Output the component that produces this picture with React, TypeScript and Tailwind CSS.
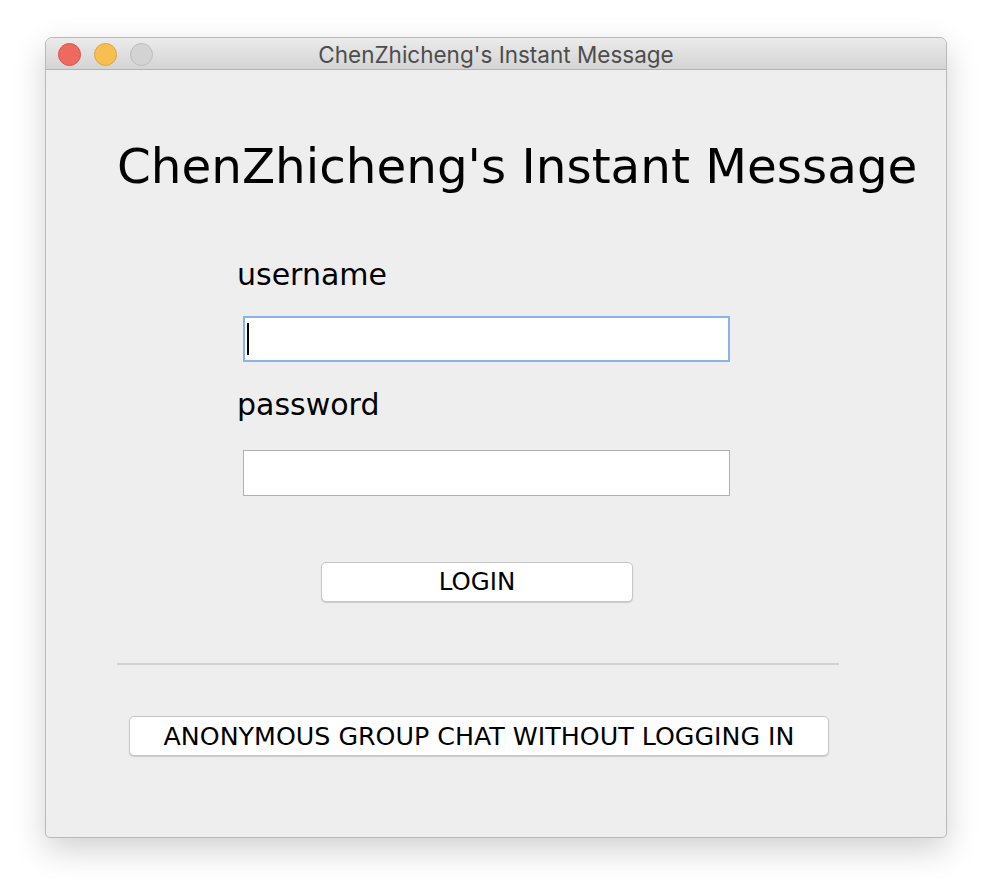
import React from 'react';

const TrafficLights: React.FC = () => (
  <div className="flex items-center gap-[13px] pl-[12px] pt-[1px]">
    <span className="block w-[23px] h-[23px] rounded-full bg-[#ee6a5f] border border-[#d8544a]" />
    <span className="block w-[23px] h-[23px] rounded-full bg-[#f6bf4f] border border-[#dca43e]" />
    <span className="block w-[23px] h-[23px] rounded-full bg-[#d3d3d3] border border-[#bcbcbc]" />
  </div>
);

const App: React.FC = () => {
  return (
    <div className="w-[992px] h-[892px] bg-white overflow-hidden pt-[37px] pl-[45px]">
      <div className="w-[902px] h-[801px] flex flex-col rounded-t-[7px] rounded-b-[5px] border border-[#b9b9b9] bg-[#eeeeee] shadow-[0_12px_32px_rgba(0,0,0,0.18)] overflow-hidden">
        {/* title bar */}
        <div className="relative h-[32px] shrink-0 flex items-center bg-gradient-to-b from-[#ebebeb] to-[#d4d4d4] border-b border-[#b3b3b3]">
          <TrafficLights />
          <div className="absolute inset-0 flex items-center justify-center pt-[2px] text-[22.5px] text-[#4d4d4d] font-['Inter',sans-serif] pointer-events-none">
            ChenZhicheng's Instant Message
          </div>
        </div>

        {/* body */}
        <div className="flex flex-col font-['DejaVu_Sans',sans-serif] text-black">
          <h1 className="mt-[72px] ml-[71px] text-[48.4px] leading-none whitespace-nowrap">
            ChenZhicheng's Instant Message
          </h1>

          <div className="mt-[70px] ml-[191px] text-[30px] leading-none">username</div>
          <div className="mt-[26px] ml-[197px] w-[487px] h-[46px] bg-white border-2 border-[#88b3ee] flex items-center pl-[2px]">
            <span className="block w-[2px] h-[32px] bg-black" />
          </div>

          <div className="mt-[28px] ml-[191px] text-[30px] leading-none">password</div>
          <div className="mt-[30px] ml-[197px] w-[487px] h-[46px] bg-white border border-[#b1b1b1]" />

          <button className="mt-[66px] ml-[275px] w-[312px] h-[40px] bg-white rounded-[5px] border border-[#c6c6c6] shadow-[0_1px_1px_rgba(0,0,0,0.15)] text-[24.5px] leading-none flex items-center justify-center">
            LOGIN
          </button>

          <div className="mt-[61px] ml-[71px] w-[722px] h-[2px] bg-[#d2d2d2]" />

          <button className="mt-[51px] ml-[83px] w-[700px] h-[40px] bg-white rounded-[5px] border border-[#c6c6c6] shadow-[0_1px_1px_rgba(0,0,0,0.15)] text-[25.3px] leading-none flex items-center justify-center whitespace-nowrap">
            ANONYMOUS GROUP CHAT WITHOUT LOGGING IN
          </button>
        </div>
      </div>
    </div>
  );
};

export default App;
